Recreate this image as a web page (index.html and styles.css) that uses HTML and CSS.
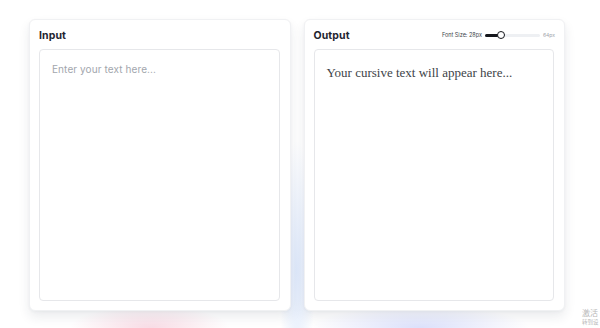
FILE: index.html
```html
<!DOCTYPE html>
<html>
<head>
<meta charset="utf-8">
<link rel="stylesheet" href="styles.css">
</head>
<body>
<div class="page">
  <section class="card">
    <div class="card-head">
      <h2 class="title">Input</h2>
    </div>
    <div class="box">
      <div class="placeholder">Enter your text here...</div>
    </div>
  </section>
  <section class="card">
    <div class="card-head">
      <h2 class="title">Output</h2>
      <div class="size-ctl">
        <span class="size-label">Font Size: 28px</span>
        <div class="slider">
          <div class="fill" style="width: 16px"></div>
          <div class="thumb"></div>
        </div>
        <span class="size-max">64px</span>
      </div>
    </div>
    <div class="box">
      <div class="cursive">Your cursive text will appear here...</div>
    </div>
  </section>
</div>
<div class="watermark">
  <div>激活</div>
  <div class="wm2">转到设</div>
</div>
</body>
</html>
```
FILE: styles.css
```css
html, body {
  margin: 0;
  padding: 0;
  width: 600px;
  height: 328px;
  overflow: hidden;
}
body {
  font-family: Inter, "Noto Sans", sans-serif;
  background:
    radial-gradient(ellipse 80px 22px at 150px 328px, rgba(244, 196, 212, 0.6), transparent),
    radial-gradient(ellipse 18px 130px at 297px 270px, rgba(212, 226, 250, 0.75), transparent),
    radial-gradient(ellipse 110px 22px at 420px 328px, rgba(200, 208, 250, 0.65), transparent),
    #ffffff;
  position: relative;
}
.page {
  display: flex;
  gap: 13px;
  padding: 19px 35px 0 29px;
}
.card {
  flex: 1;
  height: 292px;
  box-sizing: border-box;
  background: #fff;
  border: 1px solid #f0f1f3;
  border-radius: 6px;
  box-shadow: 0 6px 12px rgba(30, 40, 70, 0.09), 0 1px 3px rgba(30, 40, 70, 0.04);
  padding: 7px 10px 9px 9px;
  display: flex;
  flex-direction: column;
}
.card-head {
  height: 16px;
  margin-bottom: 6px;
  display: flex;
  align-items: center;
  justify-content: space-between;
}
.title {
  margin: 0;
  font-size: 10.5px;
  font-weight: 700;
  color: #1f2430;
  letter-spacing: 0.1px;
}
.box {
  flex: 1;
  border: 1px solid #e6e7ea;
  border-radius: 4px;
  padding: 12px 12px;
}
.placeholder {
  font-size: 10px;
  color: #a2a6ad;
  letter-spacing: 0.1px;
  margin-top: 1px;
}
.cursive {
  font-family: "Liberation Serif", "DejaVu Serif", serif;
  font-size: 13px;
  color: #404448;
  margin-top: 3px;
}
.size-ctl {
  display: flex;
  align-items: center;
  gap: 3px;
  margin-right: -1px;
}
.size-label {
  font-size: 5.5px;
  color: #3a3f48;
}
.slider {
  position: relative;
  width: 55px;
  height: 3px;
  background: #eef0f3;
  border-radius: 2px;
}
.fill {
  height: 3px;
  background: #15171c;
  border-radius: 2px;
}
.thumb {
  position: absolute;
  left: 12px;
  top: -3px;
  width: 8px;
  height: 8px;
  box-sizing: border-box;
  border: 1.3px solid #15171c;
  border-radius: 50%;
  background: #fff;
}
.size-max {
  font-size: 5px;
  color: #a0a4aa;
}
.watermark {
  position: absolute;
  left: 582px;
  top: 308px;
  font-family: "Noto Sans CJK SC", sans-serif;
  font-size: 8px;
  line-height: 10px;
  color: #b8b8b8;
  white-space: nowrap;
}
.wm2 {
  font-size: 5.5px;
  line-height: 8px;
}
```
